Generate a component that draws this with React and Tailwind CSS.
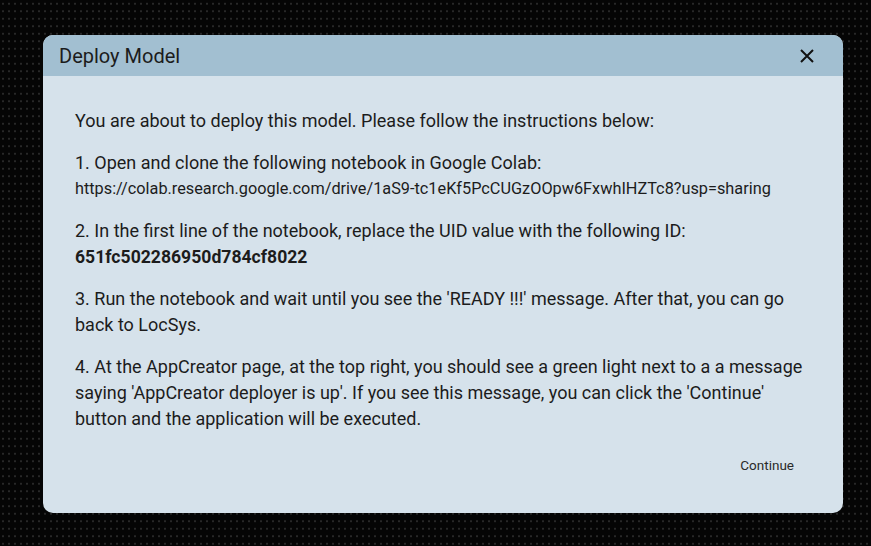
import React from 'react';

const DeployModal = () => {
    return (
        <div className="w-[800px] h-[478px] rounded-[10px] overflow-hidden bg-[#d6e2eb] text-[#1c1c1c] flex flex-col">
            <div className="h-[41px] shrink-0 bg-[#a2bfd1] flex items-center justify-between pl-4 pr-[28px]">
                <h2 className="text-[20px] leading-none">Deploy Model</h2>
                <button className="w-4 h-4 flex items-center justify-center">
                    <svg width="16" height="16" viewBox="0 0 16 16" fill="none" stroke="#111" strokeWidth="2">
                        <path d="M2 2 L14 14 M14 2 L2 14" />
                    </svg>
                </button>
            </div>
            <div className="px-8 pt-[32px] text-[18px] leading-[26px]">
                <p>You are about to deploy this model. Please follow the instructions below:</p>
                <p className="mt-4">1. Open and clone the following notebook in Google Colab:</p>
                <p className="text-[16.3px]">https://colab.research.google.com/drive/1aS9-tc1eKf5PcCUGzOOpw6FxwhIHZTc8?usp=sharing</p>
                <p className="mt-4">2. In the first line of the notebook, replace the UID value with the following ID:</p>
                <p className="font-bold text-[17.6px]">651fc502286950d784cf8022</p>
                <p className="mt-4">3. Run the notebook and wait until you see the 'READY !!!' message. After that, you can go back to LocSys.</p>
                <p className="mt-4">
                    4. At the AppCreator page, at the top right, you should see a green light next to a a message saying 'AppCreator deployer is up'. If you see this message, you can click the 'Continue' button and the application will be executed.
                </p>
                <div className="flex justify-end mt-[17px]">
                    <button className="text-[13.5px] leading-5 text-[#2a2a2a] px-4 py-1.5 mr-[1px]">Continue</button>
                </div>
            </div>
        </div>
    );
};

export default function App() {
    return (
        <div
            className="w-[871px] h-[546px] bg-[#050505] bg-[radial-gradient(#282828_1px,transparent_1px)] bg-[size:6px_7.5px] pt-[35px] pl-[43px]"
            style={{ fontFamily: 'Roboto, "Noto Sans", sans-serif' }}
        >
            <DeployModal />
        </div>
    );
}
